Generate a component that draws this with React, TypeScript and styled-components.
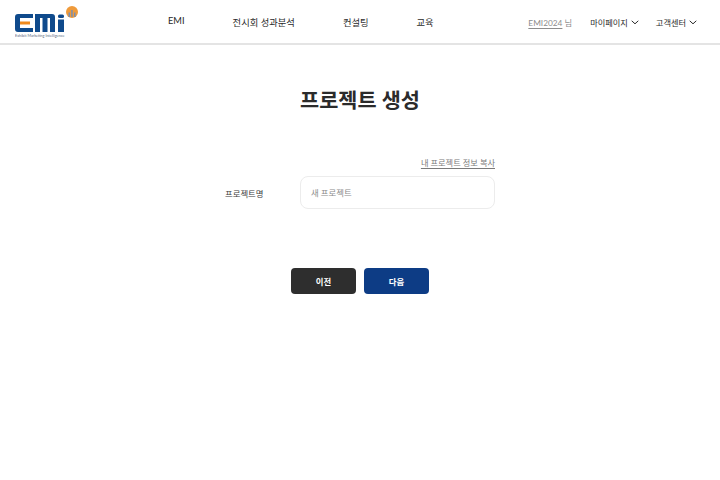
import React from "react";
import styled, { createGlobalStyle } from "styled-components";

const Global = createGlobalStyle`
  html, body { margin: 0; padding: 0; background: #fff; }
  body { font-family: "Lato", "Noto Sans CJK KR", sans-serif; }
  * { box-sizing: border-box; }
`;

const Page = styled.div`
  width: 720px;
  height: 480px;
  overflow: hidden;
  background: #fff;
`;

const Header = styled.header`
  height: 45px;
  display: flex;
  align-items: center;
  padding: 0 23px 0 15px;
  border-bottom: 2px solid #e4e4e4;
`;

const LogoBox = styled.div`
  width: 64px;
  height: 36px;
  margin-top: -1px;
  flex: none;
`;

const Nav = styled.nav`
  display: flex;
  gap: 48px;
  margin-left: 89px;
  font-size: 9.3px;
  color: #2a2a2a;
`;

const NavItem = styled.span`
  white-space: nowrap;
`;

const Utility = styled.div`
  margin-left: auto;
  display: flex;
  align-items: center;
  font-size: 8.2px;
  color: #2a2a2a;
`;

const UserText = styled.span`
  color: #8c8c8c;
  font-size: 8.3px;
  margin-right: 18px;
  white-space: nowrap;
`;

const UserName = styled.span`
  text-decoration: underline;
  text-underline-offset: 2px;
`;

const Menu = styled.span<{ $gap?: number }>`
  display: flex;
  align-items: center;
  gap: 3px;
  margin-right: ${(p) => p.$gap ?? 0}px;
  white-space: nowrap;
`;

const ChevronIcon = styled.svg`
  margin-top: 1px;
`;

const Main = styled.main`
  display: flex;
  flex-direction: column;
  align-items: center;
`;

const Title = styled.h1`
  margin: 41px 0 0;
  font-size: 20.800px;
  line-height: 28px;
  font-weight: 700;
  color: #2b2b2b;
`;

const Form = styled.section`
  width: 270px;
  margin-top: 43px;
  display: flex;
  flex-direction: column;
`;

const CopyLink = styled.a`
  align-self: flex-end;
  font-size: 8.2px;
  line-height: 12px;
  color: #7a7a7a;
  text-decoration: underline;
  text-underline-offset: 2px;
`;

const Row = styled.div`
  display: grid;
  grid-template-columns: 75px 195px;
  align-items: center;
  margin-top: 7px;
`;

const Label = styled.label`
  font-size: 8.4px;
  color: #3c3c3c;
`;

const Input = styled.input`
  height: 33px;
  width: 195px;
  padding: 0 10px;
  border: 1px solid #ececec;
  border-radius: 8px;
  font-family: inherit;
  font-size: 8.4px;
  background: #fff;
  outline: none;
  &::placeholder { color: #8a8a8a; opacity: 1; }
`;

const Actions = styled.div`
  display: flex;
  gap: 8px;
  margin-top: 59px;
`;

const Button = styled.button<{ $primary?: boolean }>`
  width: 65px;
  height: 26px;
  border: 0;
  border-radius: 4px;
  font-family: inherit;
  font-size: 8.4px;
  font-weight: 700;
  color: #fff;
  background: ${(p) => (p.$primary ? "#0d3c85" : "#2e2e2e")};
`;

const Chevron = () => (
  <ChevronIcon width="8" height="5" viewBox="0 0 8 5" fill="none" stroke="#2a2a2a" strokeWidth="1">
    <path d="M.7.8 4 3.8 7.3.8" />
  </ChevronIcon>
);

const Logo = () => (
  <svg width="64" height="36" viewBox="0 0 64 36">
    <path fill="#0f4a8c" d="M3 11h15v4H5v10h13v4H3a3 3 0 0 1-3-3V14a3 3 0 0 1 3-3z" />
    <rect x="5" y="18.500" width="10" height="3" fill="#f08a1d" />
    <path fill="#0f4a8c" d="M20 11h17a3 3 0 0 1 3 3v15h-5V15h-2.500v14h-5V15H25v14h-5z" />
    <rect x="43" y="16.500" width="6" height="12.500" fill="#0f4a8c" />
    <rect x="43" y="11.500" width="6" height="3.500" rx="1.500" fill="#0f4a8c" />
    <circle cx="57" cy="9" r="6" fill="#ef9a3a" />
    <path fill="#7b8fb0" d="M53.500 14V9.500H55V14zM56.200 14V7h1.500v7zM59 14V9.500h1.500V14z" />
    <text x="0" y="33.500" fontSize="3.800" fill="#5b6a80" fontFamily="Lato, sans-serif">
      Exhibit Marketing Intelligence
    </text>
  </svg>
);

export default function App() {
  return (
    <Page>
      <Global />
      <Header>
        <LogoBox>
          <Logo />
        </LogoBox>
        <Nav>
          <NavItem>EMI</NavItem>
          <NavItem>전시회 성과분석</NavItem>
          <NavItem>컨설팅</NavItem>
          <NavItem>교육</NavItem>
        </Nav>
        <Utility>
          <UserText>
            <UserName>EMI2024</UserName> 님
          </UserText>
          <Menu $gap={17}>
            마이페이지 <Chevron />
          </Menu>
          <Menu>
            고객센터 <Chevron />
          </Menu>
        </Utility>
      </Header>
      <Main>
        <Title>프로젝트 생성</Title>
        <Form>
          <CopyLink>내 프로젝트 정보 복사</CopyLink>
          <Row>
            <Label>프로젝트명</Label>
            <Input placeholder="새 프로젝트" />
          </Row>
        </Form>
        <Actions>
          <Button>이전</Button>
          <Button $primary>다음</Button>
        </Actions>
      </Main>
    </Page>
  );
}
